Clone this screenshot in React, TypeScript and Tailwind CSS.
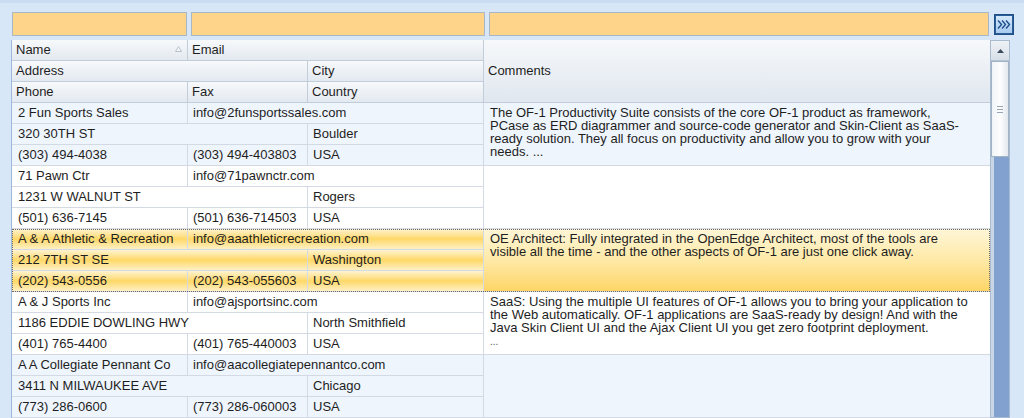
import React from "react";

type Rec = {
  name: string;
  email: string;
  address: string;
  city: string;
  phone: string;
  fax: string;
  country: string;
  comments: string[];
  ellipsisLast?: boolean;
};

const records: Rec[] = [
  {
    name: "2 Fun Sports Sales",
    email: "info@2funsportssales.com",
    address: "320 30TH ST",
    city: "Boulder",
    phone: "(303) 494-4038",
    fax: "(303) 494-403803",
    country: "USA",
    comments: [
      "The OF-1 Productivity Suite consists of the core OF-1 product as framework,",
      "PCase as ERD diagrammer and source-code generator and Skin-Client as SaaS-",
      "ready solution. They all focus on productivity and allow you to grow with your",
      "needs. ...",
    ],
  },
  {
    name: "71 Pawn Ctr",
    email: "info@71pawnctr.com",
    address: "1231 W WALNUT ST",
    city: "Rogers",
    phone: "(501) 636-7145",
    fax: "(501) 636-714503",
    country: "USA",
    comments: [],
  },
  {
    name: "A & A Athletic & Recreation",
    email: "info@aaathleticrecreation.com",
    address: "212 7TH ST SE",
    city: "Washington",
    phone: "(202) 543-0556",
    fax: "(202) 543-055603",
    country: "USA",
    comments: [
      "OE Architect: Fully integrated in the OpenEdge Architect, most of the tools are",
      "visible all the time - and the other aspects of OF-1 are just one click away.",
    ],
  },
  {
    name: "A & J Sports Inc",
    email: "info@ajsportsinc.com",
    address: "1186 EDDIE DOWLING HWY",
    city: "North Smithfield",
    phone: "(401) 765-4400",
    fax: "(401) 765-440003",
    country: "USA",
    comments: [
      "SaaS: Using the multiple UI features of OF-1 allows you to bring your application to",
      "the Web automatically. OF-1 applications are SaaS-ready by design! And with the",
      "Java Skin Client UI and the Ajax Client UI you get zero footprint deployment.",
      "...",
    ],
    ellipsisLast: true,
  },
  {
    name: "A A Collegiate Pennant Co",
    email: "info@aacollegiatepennantco.com",
    address: "3411 N MILWAUKEE AVE",
    city: "Chicago",
    phone: "(773) 286-0600",
    fax: "(773) 286-060003",
    country: "USA",
    comments: [],
  },
];

const font = { fontFamily: '"Liberation Sans", Arial, sans-serif' };

function Cell({
  children,
  className,
}: {
  children?: React.ReactNode;
  className: string;
}) {
  return (
    <div
      className={
        "flex items-center overflow-hidden whitespace-nowrap border-r border-b border-[#d3dae3] pl-[5px] " +
        className
      }
    >
      {children}
    </div>
  );
}

function HCell({
  children,
  className,
}: {
  children?: React.ReactNode;
  className: string;
}) {
  return (
    <div
      className={
        "relative flex items-center overflow-hidden whitespace-nowrap border-r border-b border-[#c3cdd9] bg-gradient-to-b from-[#f7f9fb] to-[#e3e9f0] pl-[4px] " +
        className
      }
    >
      {children}
    </div>
  );
}

function Record({ r, idx }: { r: Rec; idx: number }) {
  const selected = idx === 2;
  const alt = idx % 2 === 0;
  const bg = selected
    ? "bg-gradient-to-b from-[#fff3cf] via-[#fed865] to-[#fff0c2]"
    : alt
    ? "bg-[#eef5fd]"
    : "bg-white";
  const commentBg = selected
    ? "bg-gradient-to-b from-[#fff6d8] via-[#fee9a6] to-[#fed565]"
    : alt
    ? "bg-[#eef5fd]"
    : "bg-white";
  return (
    <div
      className={
        "relative grid grid-cols-[176px_120px_176px_506px] grid-rows-[21px_21px_21px] " +
        (selected ? "outline outline-1 outline-dotted outline-[#6b6b6b] -outline-offset-1 z-10" : "")
      }
    >
      <Cell className={"col-start-1 row-start-1 pl-[6px] " + bg}>{r.name}</Cell>
      <Cell className={"col-start-2 col-span-2 row-start-1 " + bg}>{r.email}</Cell>
      <Cell className={"col-start-1 col-span-2 row-start-2 pl-[6px] " + bg}>{r.address}</Cell>
      <Cell className={"col-start-3 row-start-2 " + bg}>{r.city}</Cell>
      <Cell className={"col-start-1 row-start-3 pl-[6px] " + bg}>{r.phone}</Cell>
      <Cell className={"col-start-2 row-start-3 " + bg}>{r.fax}</Cell>
      <Cell className={"col-start-3 row-start-3 " + bg}>{r.country}</Cell>
      <div
        className={
          "col-start-4 row-start-1 row-span-3 overflow-hidden border-b border-[#d3dae3] pl-[6px] pt-[3px] leading-[13px] " +
          commentBg
        }
      >
        {r.comments.map((l, i) => (
          <div
            key={i}
            className={
              "whitespace-nowrap " +
              (r.ellipsisLast && i === r.comments.length - 1
                ? "text-[10px] leading-[16px] text-[#555]"
                : "")
            }
          >
            {l}
          </div>
        ))}
      </div>
    </div>
  );
}

function ChevronButton() {
  return (
    <div className="flex h-[21px] w-[20px] items-center justify-center border border-[#1f4f86] bg-[#2b5d96] p-[1px]">
      <div className="flex h-full w-full items-center justify-center bg-gradient-to-b from-[#d4e8fb] to-[#a9cbef]">
        <svg width="14" height="11" viewBox="0 0 14 11" fill="none">
          <path d="M1 1.5 L4.5 5.5 L1 9.5" stroke="#1c4f8c" strokeWidth="1.4" />
          <path d="M5 1.5 L8.5 5.5 L5 9.5" stroke="#1c4f8c" strokeWidth="1.4" />
          <path d="M9 1.5 L12.5 5.5 L9 9.5" stroke="#1c4f8c" strokeWidth="1.4" />
        </svg>
      </div>
    </div>
  );
}

function Scrollbar() {
  return (
    <div className="flex w-[20px] flex-col border border-[#a9bbd1] bg-[#82a1ce]">
      <div className="flex h-[20px] items-center justify-center border-b border-[#b5c3d4] bg-gradient-to-b from-[#eef2f6] to-[#d7dfe8]">
        <svg width="7" height="4" viewBox="0 0 7 4">
          <path d="M0 4 L3.5 0 L7 4 Z" fill="#3d4a5a" />
        </svg>
      </div>
      <div className="flex h-[96px] items-center justify-center border border-[#a3b3c6] bg-gradient-to-r from-[#f1f4f7] via-[#fdfdfe] to-[#e3e8ee]">
        <div className="flex flex-col gap-[2px]">
          <div className="h-px w-[6px] bg-[#9aa5b3]" />
          <div className="h-px w-[6px] bg-[#9aa5b3]" />
          <div className="h-px w-[6px] bg-[#9aa5b3]" />
        </div>
      </div>
      <div className="flex-1 border-l-[3px] border-[#c9d6e6] bg-[#82a1ce]" />
    </div>
  );
}

export default function App() {
  return (
    <div
      className="h-[418px] w-[1024px] overflow-hidden bg-[#d8e7f7] text-[13px] text-[#1e1e1e]"
      style={font}
    >
      <div className="h-[3px] bg-[#c9dcf2]" />
      <div className="flex items-center gap-[4px] pl-[12px] pt-[9px]">
        <div className="h-[24px] w-[175px] border border-[#a8b6c6] bg-[#fed38a]" />
        <div className="h-[24px] w-[294px] border border-[#a8b6c6] bg-[#fed38a]" />
        <div className="h-[24px] w-[500px] border border-[#a8b6c6] bg-[#fed38a]" />
        <div className="ml-[1px]">
          <ChevronButton />
        </div>
      </div>
      <div className="mt-[4px] flex pl-[11px]">
        <div className="border-l border-[#9fb9da] bg-white">
          <div className="grid grid-cols-[176px_120px_176px_506px] grid-rows-[21px_21px_21px]">
            <HCell className="col-start-1 row-start-1">
              Name
              <svg
                className="absolute right-[5px] top-[6px]"
                width="7"
                height="6"
                viewBox="0 0 7 6"
              >
                <path d="M0.5 5.5 L3.5 0.5 L6.5 5.5 Z" fill="#f4f6f8" stroke="#b9c2cc" />
              </svg>
            </HCell>
            <HCell className="col-start-2 col-span-2 row-start-1">Email</HCell>
            <HCell className="col-start-1 col-span-2 row-start-2">Address</HCell>
            <HCell className="col-start-3 row-start-2">City</HCell>
            <HCell className="col-start-1 row-start-3">Phone</HCell>
            <HCell className="col-start-2 row-start-3">Fax</HCell>
            <HCell className="col-start-3 row-start-3">Country</HCell>
            <div className="col-start-4 row-start-1 row-span-3 flex items-center border-b border-[#c3cdd9] bg-gradient-to-b from-[#f6f8fa] to-[#e0e7ef] pl-[4px]">
              Comments
            </div>
          </div>
          {records.map((r, i) => (
            <Record key={i} r={r} idx={i} />
          ))}
        </div>
        <Scrollbar />
      </div>
    </div>
  );
}
